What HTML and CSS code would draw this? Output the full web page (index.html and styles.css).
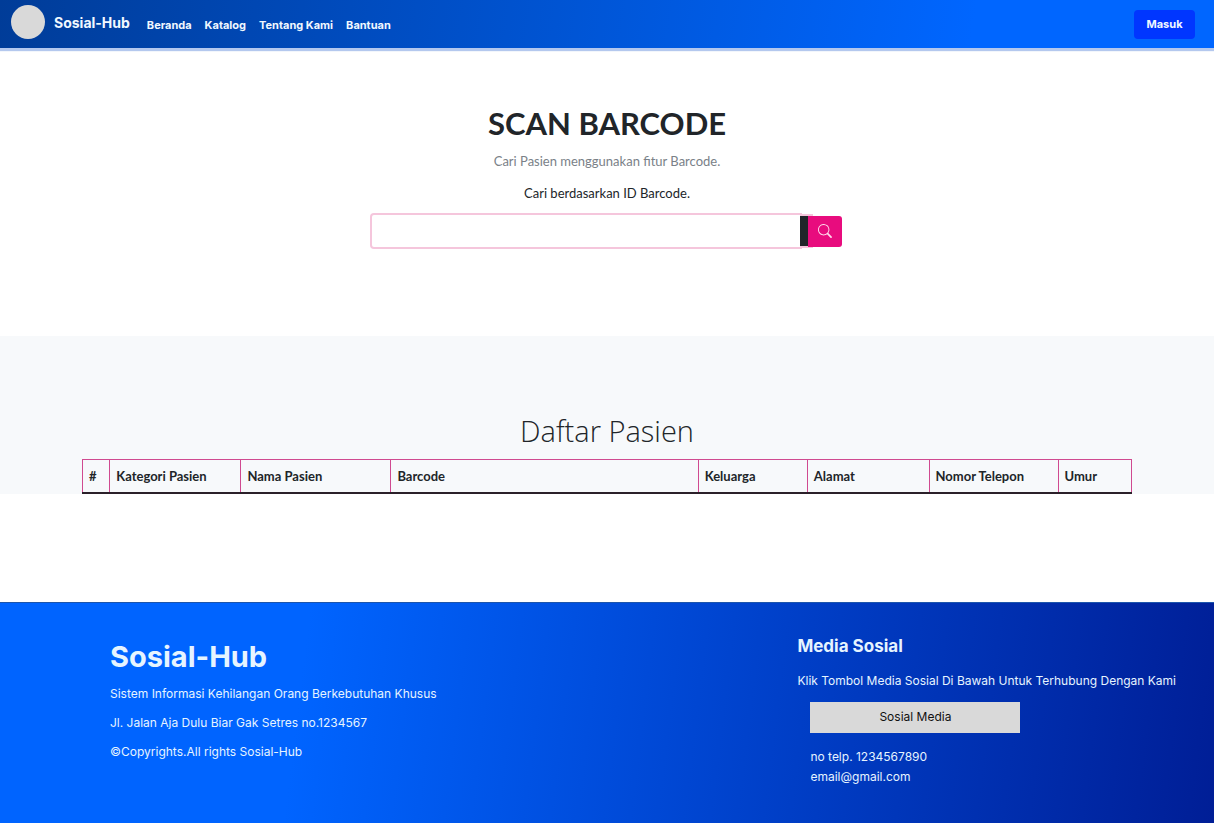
FILE: index.html
```html
<!DOCTYPE html>
<html lang="id">
<head>
<meta charset="utf-8">
<meta name="viewport" content="width=device-width, initial-scale=1">
<title>Sosial-Hub</title>
<link rel="stylesheet" href="styles.css">
</head>
<body>
<header class="topbar">
  <span class="avatar"></span>
  <a class="brand" href="#">Sosial-Hub</a>
  <nav class="nav">
    <a href="#">Beranda</a>
    <a href="#">Katalog</a>
    <a href="#">Tentang Kami</a>
    <a href="#">Bantuan</a>
  </nav>
  <button class="login" type="button">Masuk</button>
</header>
<main class="main">
  <section class="scan">
    <h1 class="scan-title">SCAN BARCODE</h1>
    <p class="scan-lead">Cari Pasien menggunakan fitur Barcode.</p>
    <form class="search-form">
      <label class="scan-label" for="barcode">Cari berdasarkan ID Barcode.</label>
      <div class="search">
        <input class="search-input" id="barcode" type="text">
        <span class="search-addon"></span>
        <button class="search-button" type="button" aria-label="Cari">
          <svg width="14" height="14" viewBox="0 0 16 16" fill="currentColor" aria-hidden="true"><path d="M11.742 10.344a6.500 6.500 0 1 0-1.397 1.398l3.850 3.850a1 1 0 0 0 1.415-1.414l-3.868-3.834zM12 6.500a5.500 5.500 0 1 1-11 0 5.500 5.500 0 0 1 11 0z"/></svg>
        </button>
      </div>
    </form>
  </section>
  <section class="patients">
    <h2 class="patients-title">Daftar Pasien</h2>
    <table class="table">
      <colgroup>
        <col class="c-no"><col class="c-category"><col class="c-name"><col class="c-barcode"><col class="c-family"><col class="c-address"><col class="c-phone"><col class="c-age">
      </colgroup>
      <thead>
        <tr>
          <th scope="col">#</th>
          <th scope="col">Kategori Pasien</th>
          <th scope="col">Nama Pasien</th>
          <th scope="col">Barcode</th>
          <th scope="col">Keluarga</th>
          <th scope="col">Alamat</th>
          <th scope="col">Nomor Telepon</th>
          <th scope="col">Umur</th>
        </tr>
      </thead>
    </table>
  </section>
</main>
<footer class="footer">
  <div class="about">
    <h2 class="about-title">Sosial-Hub</h2>
    <p>Sistem Informasi Kehilangan Orang Berkebutuhan Khusus</p>
    <p>Jl. Jalan Aja Dulu Biar Gak Setres no.1234567</p>
    <p>©Copyrights.All rights Sosial-Hub</p>
  </div>
  <div class="social">
    <h3 class="social-title">Media Sosial</h3>
    <p>Klik Tombol Media Sosial Di Bawah Untuk Terhubung Dengan Kami</p>
    <div class="contact">
      <button class="social-button" type="button">Sosial Media</button>
      <p>no telp. 1234567890</p>
      <p>email@gmail.com</p>
    </div>
  </div>
</footer>
</body>
</html>
```
FILE: styles.css
```css
* {
  box-sizing: border-box;
}

body {
  margin: 0;
  min-height: 100vh;
  display: flex;
  flex-direction: column;
  background: #fff;
  color: #212529;
  font-family: Lato, sans-serif;
  font-size: 13px;
  line-height: 20px;
}

h1, h2, h3, p {
  margin: 0;
}

a {
  color: inherit;
  text-decoration: none;
}

button {
  border: 0;
  padding: 0;
  font: inherit;
  cursor: pointer;
}

.topbar {
  display: flex;
  align-items: center;
  height: 48px;
  padding: 0 19px 4px 11px;
  background: linear-gradient(100deg, #003c98 0%, #0066ff 80%);
  box-shadow: 0 3px 1px #b4c8ee;
  color: #f0f8ff;
  font-family: Inter, sans-serif;
}

.avatar {
  width: 34px;
  height: 34px;
  border-radius: 50%;
  background: #d9d9d9;
}

.brand {
  margin-left: 9px;
  padding-top: 2px;
  font-size: 14px;
  font-weight: 700;
}

.nav {
  display: flex;
  gap: 13px;
  margin-left: 17px;
  padding-top: 5px;
  font-size: 11px;
  font-weight: 700;
}

.login {
  width: 61px;
  height: 29px;
  margin-left: auto;
  margin-top: 4px;
  border-radius: 4px;
  background: #0036ff;
  color: #f0f8ff;
  font-size: 11px;
  font-weight: 700;
}

.scan {
  padding: 55px 16px 89px;
  text-align: center;
}

.scan-title {
  font-size: 31px;
  font-weight: 700;
  line-height: 40px;
}

.scan-lead {
  margin-top: 8px;
  color: #7a8188;
}

.scan-label {
  display: block;
  margin-top: 12px;
}

.search {
  display: flex;
  align-items: center;
  width: 100%;
  max-width: 470px;
  margin: 12px auto 0;
}

.search-input {
  flex: 1;
  min-width: 0;
  height: 32px;
  padding: 0 10px;
  border: 0;
  border-radius: 2px 0 0 2px;
  outline: 0;
  background: #fff;
  box-shadow: 0 0 0 2px #f5c6dc;
  font: inherit;
}

.search-addon {
  width: 8px;
  height: 30px;
  background: #212529;
  box-shadow: 3px 0 0 2px #f5c6dc;
}

.search-button {
  display: flex;
  align-items: center;
  justify-content: center;
  position: relative;
  width: 34px;
  height: 31px;
  border-radius: 0 3px 3px 0;
  background: #e80c7e;
  color: #ffd9ec;
}

.patients {
  padding: 75px 82px 0;
  background: #f7f9fb;
}

.patients-title {
  font-family: "Open Sans", sans-serif;
  font-size: 29px;
  font-weight: 300;
  line-height: 40px;
  text-align: center;
}

.table {
  width: 100%;
  margin-top: 8px;
  border-collapse: collapse;
  table-layout: fixed;
}

.table th {
  height: 33px;
  padding: 0 6px;
  border: 1px solid #d04a90;
  border-bottom: 2px solid #2b2029;
  text-align: left;
  white-space: nowrap;
}

.c-no { width: 2.6%; }
.c-category { width: 12.5%; }
.c-name { width: 14.3%; }
.c-barcode { width: 29.3%; }
.c-family { width: 10.4%; }
.c-address { width: 11.6%; }
.c-phone { width: 12.3%; }
.c-age { width: 7%; }

.footer {
  display: flex;
  flex: 1;
  justify-content: space-between;
  margin-top: 108px;
  padding: 32px 38px 38px 110px;
  border-top: 1px solid #1c55ac;
  background: linear-gradient(97deg, #0064ff 25%, #001e96 100%);
  color: #e6f4ff;
  font-family: Inter, sans-serif;
  font-size: 12px;
}

.about {
  display: flex;
  flex-direction: column;
  gap: 9px;
  padding-top: 4px;
}

.about-title {
  font-size: 29px;
  font-weight: 700;
  line-height: 36px;
}

.social-title {
  margin-bottom: 14px;
  font-size: 17px;
  font-weight: 700;
  line-height: 22px;
}

.contact {
  padding-left: 13px;
}

.social-button {
  display: block;
  width: 210px;
  height: 31px;
  margin: 11px 0 14px;
  background: #d9d9d9;
  color: #111;
}
```
